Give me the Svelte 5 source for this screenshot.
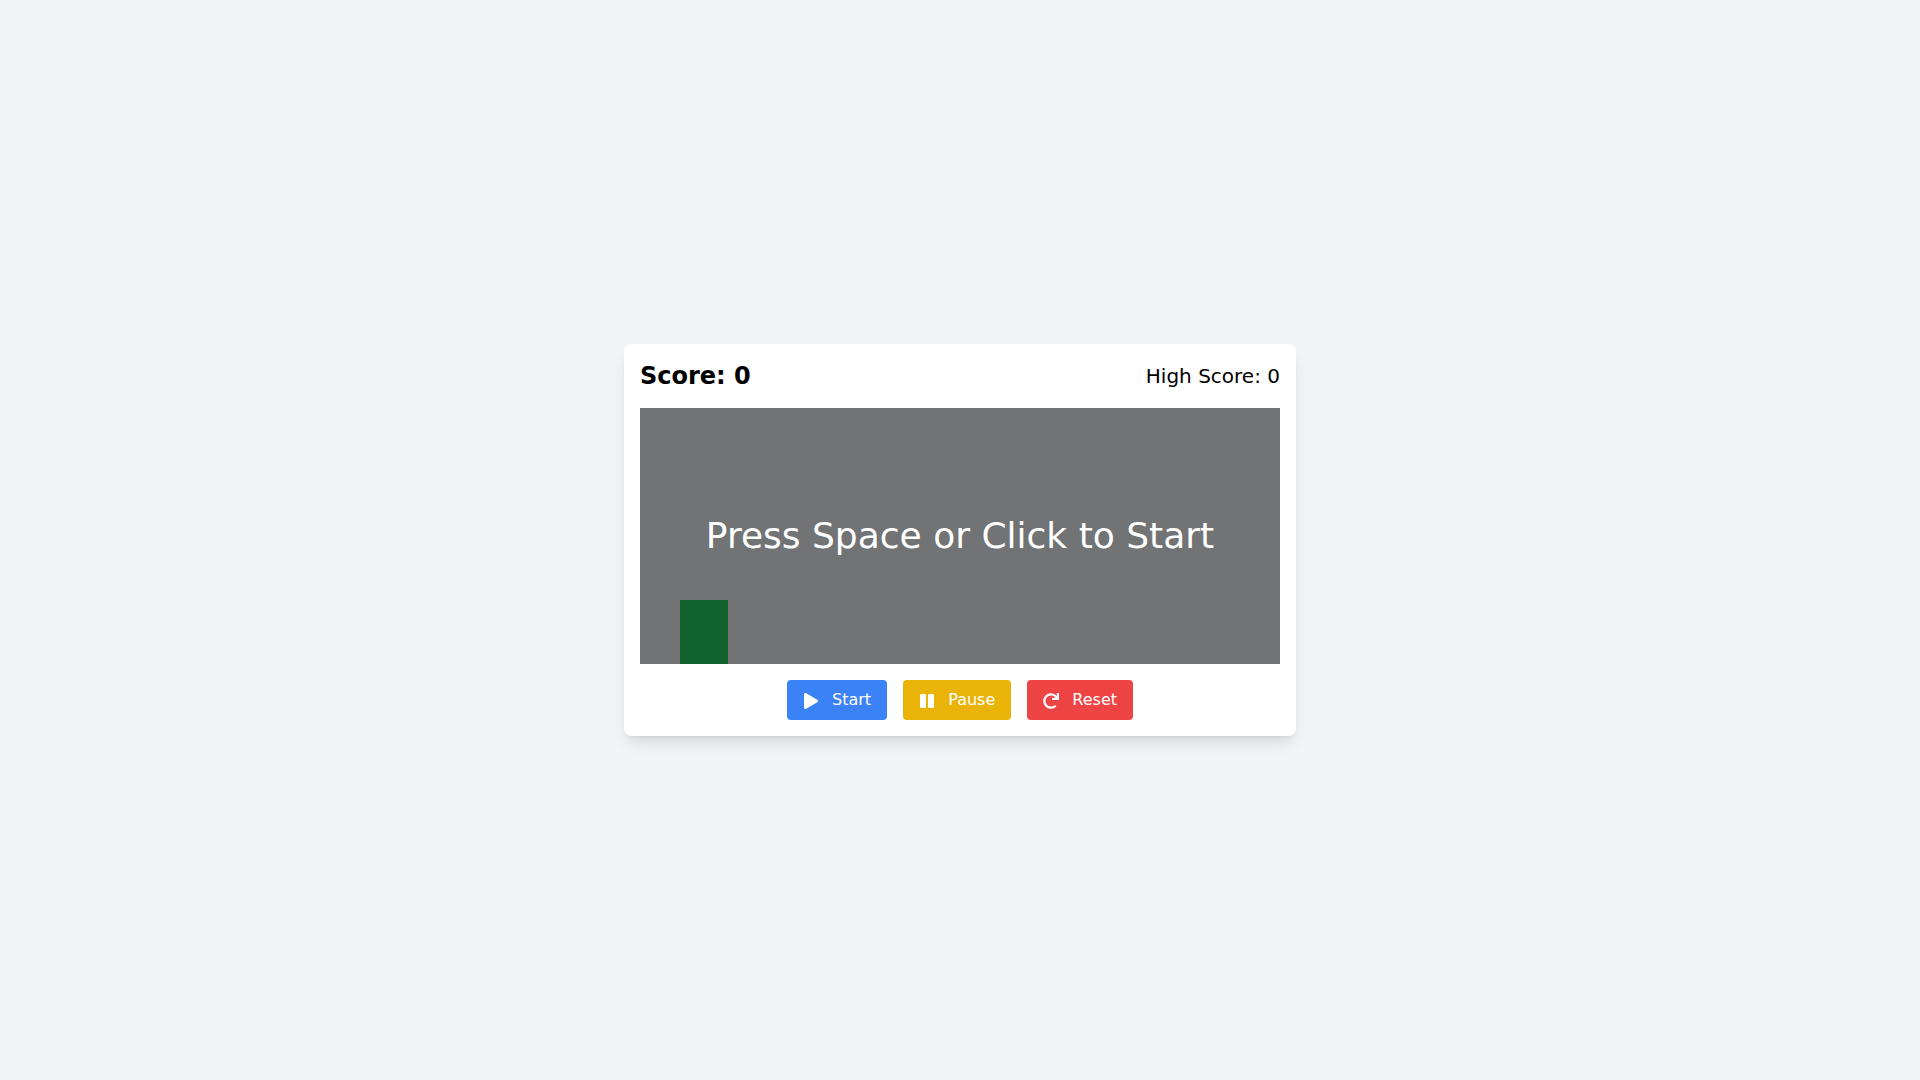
<script>
  import { onMount } from 'svelte';

  const GRAVITY = 0.8;
  const JUMP_SPEED = 15;
  const OBSTACLE_SPEED = 1;

  let status = $state('idle');
  let score = $state(0);
  let highScore = $state(0);
  let height = $state(0);
  let obstacle = $state(100);

  let velocity = 0;
  let frame;

  const reset = () => {
    cancelAnimationFrame(frame);
    status = 'idle';
    score = 0;
    height = 0;
    velocity = 0;
    obstacle = 100;
  };

  const tick = () => {
    velocity -= GRAVITY;
    height = Math.max(0, height + velocity);
    obstacle -= OBSTACLE_SPEED;

    if (obstacle < -5) {
      obstacle = 100;
      score += 1;
      highScore = Math.max(highScore, score);
    }

    // the player stands between 6% and 14% of the track
    if (obstacle > 4 && obstacle < 13 && height < 48) {
      reset();
      return;
    }
    frame = requestAnimationFrame(tick);
  };

  const start = () => {
    if (status === 'running') return;
    status = 'running';
    frame = requestAnimationFrame(tick);
  };

  const pause = () => {
    if (status !== 'running') return;
    cancelAnimationFrame(frame);
    status = 'paused';
  };

  const jump = () => {
    if (height === 0) velocity = JUMP_SPEED;
  };

  const handleKey = (event) => {
    if (event.code !== 'Space') return;
    event.preventDefault();
    if (status === 'running') jump();
    else start();
  };

  onMount(() => () => cancelAnimationFrame(frame));
</script>

<svelte:window onkeydown={handleKey} />

<main>
  <section class="card">
    <header>
      <h1>Score: {score}</h1>
      <p>High Score: {highScore}</p>
    </header>

    <div class="game">
      <div class="player" style:bottom="{height}px"></div>
      {#if status === 'running'}
        <div class="obstacle" style:left="{obstacle}%"></div>
      {:else}
        <button class="overlay" onclick={start}>Press Space or Click to Start</button>
      {/if}
    </div>

    <div class="controls">
      <button class="control start" onclick={start}>
        <svg viewBox="0 0 448 512" aria-hidden="true">
          <path d="M424.4 214.7L72.4 6.6C43.8-10.3 0 6.1 0 47.9V464c0 37.5 40.7 60.1 72.4 41.3l352-208c31.4-18.5 31.5-64.1 0-82.6z" />
        </svg>
        Start
      </button>
      <button class="control pause" onclick={pause}>
        <svg viewBox="0 0 448 512" aria-hidden="true">
          <path d="M144 479H48c-26.5 0-48-21.5-48-48V79c0-26.5 21.5-48 48-48h96c26.5 0 48 21.5 48 48v352c0 26.5-21.5 48-48 48zm304-48V79c0-26.5-21.5-48-48-48h-96c-26.5 0-48 21.5-48 48v352c0 26.5 21.5 48 48 48h96c26.5 0 48-21.5 48-48z" />
        </svg>
        Pause
      </button>
      <button class="control reset" onclick={reset}>
        <svg viewBox="0 0 512 512" aria-hidden="true">
          <path d="M500.33 0h-47.41a12 12 0 0 0-12 12.57l4 82.76A247.42 247.42 0 0 0 256 8C119.34 8 7.9 119.53 8 256.19 8.1 393.07 119.1 504 256 504a247.1 247.1 0 0 0 166.18-63.91 12 12 0 0 0 .48-17.43l-34-34a12 12 0 0 0-16.38-.55A176 176 0 1 1 402.1 157.8l-101.53-4.87a12 12 0 0 0-12.57 12v47.41a12 12 0 0 0 12 12h200.33a12 12 0 0 0 12-12V12a12 12 0 0 0-12-12z" />
        </svg>
        Reset
      </button>
    </div>
  </section>
</main>

<style>
  :global(body) {
    margin: 0;
    background: #f3f4f6;
  }

  main {
    display: flex;
    flex-direction: column;
    align-items: center;
    justify-content: center;
    min-height: 100vh;
    color: #000;
    font-family: 'DejaVu Sans', sans-serif;
    font-size: 16px;
    line-height: 24px;
  }

  button {
    border: 0;
    color: #fff;
    font: inherit;
    cursor: pointer;
  }

  .card {
    box-sizing: border-box;
    width: 100%;
    max-width: 672px;
    padding: 16px;
    background: #fff;
    border-radius: 8px;
    box-shadow:
      0 10px 15px -3px rgba(0, 0, 0, 0.1),
      0 4px 6px -4px rgba(0, 0, 0, 0.1);
  }

  header {
    display: flex;
    align-items: center;
    justify-content: space-between;
    margin-bottom: 16px;
  }

  h1 {
    margin: 0;
    font-size: 24px;
    font-weight: 700;
    line-height: 32px;
  }

  p {
    margin: 0;
    font-size: 20px;
    line-height: 28px;
  }

  .game {
    position: relative;
    height: 256px;
    overflow: hidden;
    background: #e5e7eb;
  }

  .player {
    position: absolute;
    left: 40px;
    width: 48px;
    height: 64px;
    background: #22c55e;
  }

  .obstacle {
    position: absolute;
    bottom: 0;
    width: 32px;
    height: 48px;
    background: #ef4444;
  }

  .overlay {
    position: absolute;
    inset: 0;
    width: 100%;
    padding: 0;
    background: rgba(0, 0, 0, 0.5);
    font-size: 36px;
    line-height: 40px;
  }

  .controls {
    display: flex;
    justify-content: center;
    gap: 16px;
    margin-top: 16px;
  }

  .control {
    padding: 8px 16px;
    border-radius: 4px;
  }

  .control svg {
    width: 16px;
    height: 16px;
    margin-right: 8px;
    fill: currentColor;
    vertical-align: middle;
  }

  .start {
    background: #3b82f6;
  }

  .pause {
    background: #eab308;
  }

  .reset {
    background: #ef4444;
  }

  .control:hover {
    filter: brightness(0.9);
  }
</style>
